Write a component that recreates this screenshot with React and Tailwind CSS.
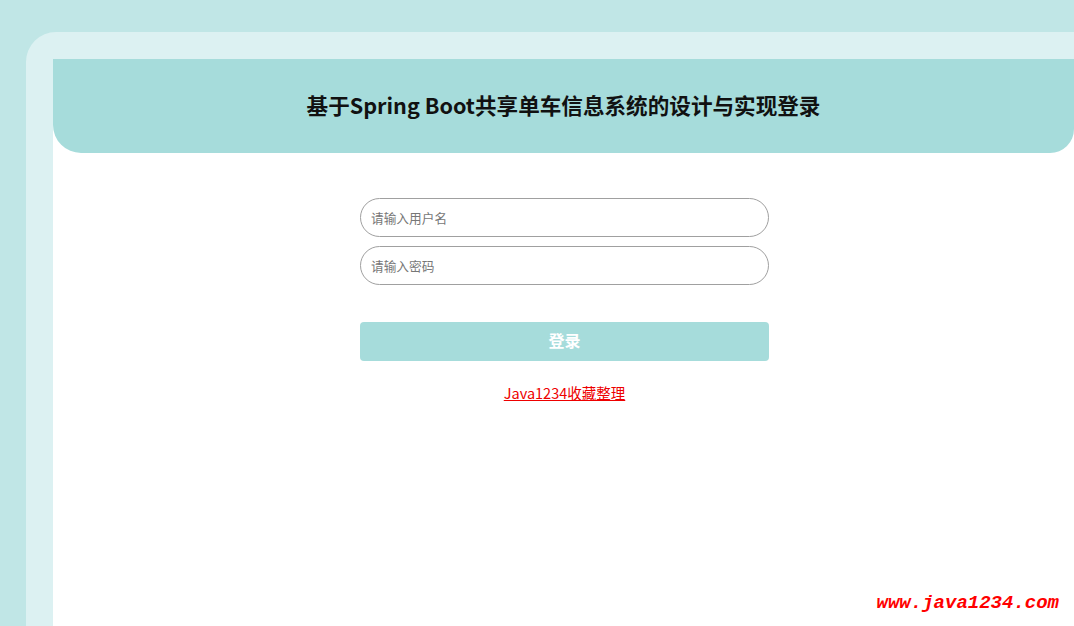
const App = () => {
    return (
        <div className="relative h-screen w-full overflow-hidden bg-[#c0e6e6] pl-[26px] pt-[32px] font-['Noto_Sans_CJK_SC','Noto_Sans',sans-serif]">
            <div className="h-full rounded-tl-[30px] bg-[#dcf1f2] pl-[27px] pt-[27px]">
                <div className="h-full bg-white">
                    <div className="flex h-[94px] items-center justify-center rounded-bl-[28px] rounded-br-[24px] bg-[#a6dcdb] pb-[2px]">
                        <h1 className="text-[21.6px] font-bold text-[#111]">基于Spring Boot共享单车信息系统的设计与实现登录</h1>
                    </div>
                    <form className="mx-auto mt-[45px] flex w-[409px] translate-x-[1px] flex-col">
                        <input
                            type="text"
                            placeholder="请输入用户名"
                            className="h-[39px] rounded-full border border-[#a0a0a0] px-[10px] text-[12.7px] text-[#333] outline-none placeholder:text-[#777]"
                        />
                        <input
                            type="password"
                            placeholder="请输入密码"
                            className="mt-[9px] h-[39px] rounded-full border border-[#a0a0a0] px-[10px] text-[12.7px] text-[#333] outline-none placeholder:text-[#777]"
                        />
                        <button type="button" className="mt-[37px] h-[39px] rounded-[4px] bg-[#a6dcdb] pb-[3px] text-[16px] font-bold text-white">
                            登录
                        </button>
                        <div className="mt-[19px] text-center">
                            <a href="#" className="text-[14.5px] text-[#e00] underline">Java1234收藏整理</a>
                        </div>
                    </form>
                </div>
            </div>
            <div className="absolute bottom-[13px] right-[15px] font-['Liberation_Mono',monospace] text-[19px] font-bold italic leading-none text-[#f00]">
                www.java1234.com
            </div>
        </div>
    )
}

export default App
